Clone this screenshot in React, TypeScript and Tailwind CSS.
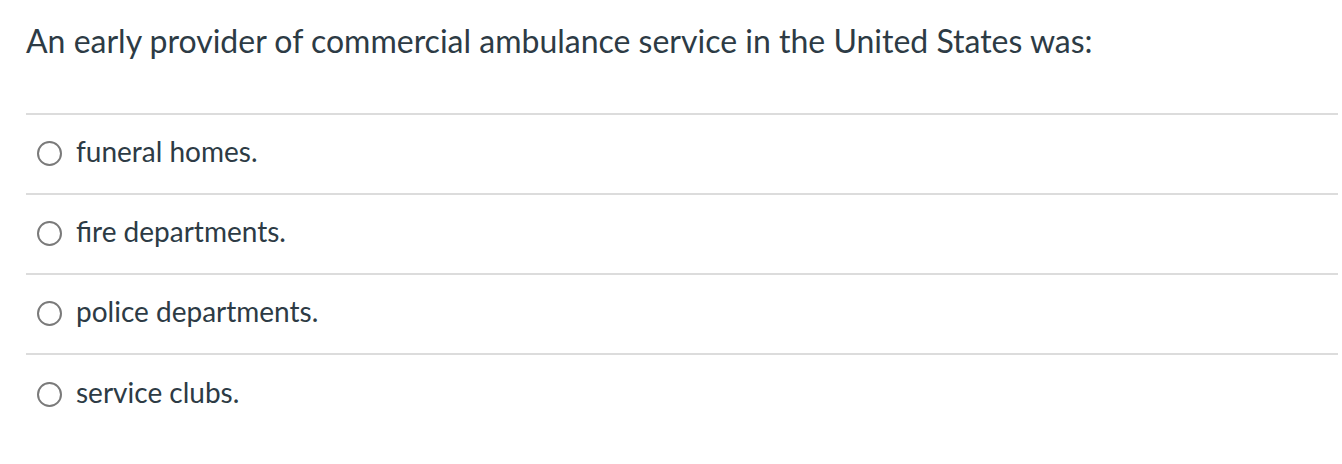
const answers = ["funeral homes.", "fire departments.", "police departments.", "service clubs."];

export default function App() {
  return (
    <div className="bg-white w-[1342px] h-[464px] pl-[26px] pr-[4px] pt-[17px] font-['Lato',sans-serif] text-[#2d3b45]">
      <h1 className="text-[32px] leading-[48px] font-normal">
        An early provider of commercial ambulance service in the United States was:
      </h1>
      <div className="mt-[48px] border-t-2 border-[#dcdcdc]">
        {answers.map((a, i) => (
          <label
            key={a}
            className={`flex items-center h-[80px] pl-[11px] pb-[6px] ${i < answers.length - 1 ? "border-b-2 border-[#dcdcdc]" : ""}`}
          >
            <span className="w-[25px] h-[25px] rounded-full border-2 border-[#7a7a7a] shrink-0 mt-[4px]" />
            <span className="ml-[14px] text-[28px]">{a}</span>
          </label>
        ))}
      </div>
    </div>
  );
}
